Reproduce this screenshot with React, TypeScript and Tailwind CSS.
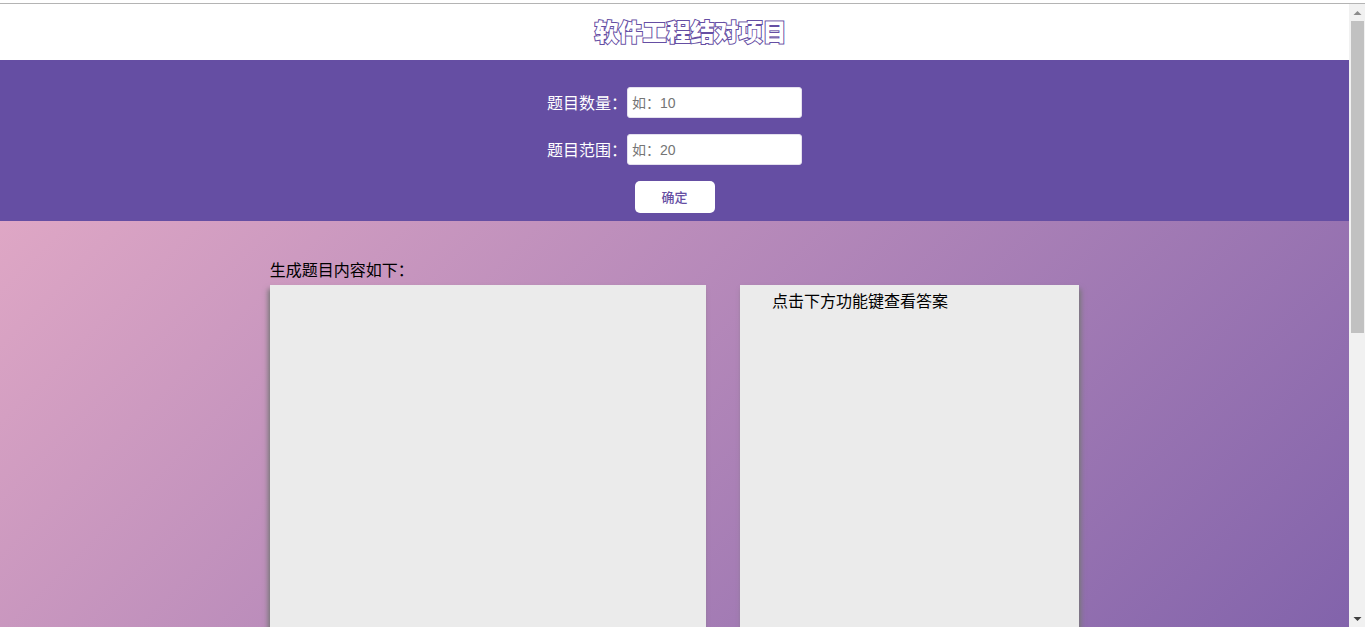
import React from "react";

function Field({ id, label, placeholder }: { id: string; label: string; placeholder: string }) {
  return (
    <div className="flex items-center">
      <label htmlFor={id} className="w-20 pb-0.5 font-['KaiTi','STKaiti','AR_PL_UKai_CN','Noto_Sans_CJK_SC',serif] text-base leading-6 text-white">
        {label}
      </label>
      <input
        id={id}
        type="text"
        placeholder={placeholder}
        className="h-[31px] w-[175px] rounded-[3px] border border-[#e4e0ee] bg-white px-1 font-['Liberation_Sans','Noto_Sans_CJK_SC',sans-serif] text-sm text-black placeholder:text-[#757575]"
      />
    </div>
  );
}

function Scrollbar() {
  return (
    <div className="flex w-4 shrink-0 flex-col items-center bg-[#f1f1f1]" aria-hidden="true">
      <svg className="h-[17px] w-4 shrink-0" viewBox="0 0 16 17">
        <path d="M4.5 11 8.5 7l4 4z" fill="#8b8b8b" />
      </svg>
      <div className="min-h-0 w-full flex-1 pl-0.5 pr-px">
        <div className="h-[53%] bg-[#c1c1c1]" />
      </div>
      <svg className="h-[17px] w-4 shrink-0" viewBox="0 0 16 17">
        <path d="M4.5 7h8l-4 4z" fill="#404040" />
      </svg>
    </div>
  );
}

export default function App() {
  return (
    <div className="flex h-screen flex-col border-t-[3px] border-white bg-white font-['Noto_Sans_CJK_SC',sans-serif]">
      <div className="flex min-h-0 flex-1 border-t border-[#b4b4b4]">
        <div className="min-w-0 flex-1 overflow-y-auto [scrollbar-width:none]">
          <div className="min-h-[1176px] bg-[linear-gradient(135deg,#eaafc8,#654ea3)]">
            <header className="flex h-14 items-center justify-center bg-white pb-0.5 pl-8">
              <h1 className="text-2xl font-black text-white [-webkit-text-stroke:2px_#654ea3] [paint-order:stroke_fill]">
                软件工程结对项目
              </h1>
            </header>
            <form className="flex flex-col items-center gap-4 bg-[#654ea3] pt-[27px] pb-2" onSubmit={(e) => e.preventDefault()}>
              <Field id="count" label="题目数量：" placeholder="如：10" />
              <Field id="range" label="题目范围：" placeholder="如：20" />
              <button type="submit" className="h-8 w-20 rounded-[5px] bg-white text-[13px] font-medium text-[#654ea3]">
                确定
              </button>
            </form>
            <main className="mx-auto w-3/5 pt-9">
              <p className="mb-1 text-base leading-6">生成题目内容如下：</p>
              <div className="flex justify-between">
                <section className="h-[600px] w-[53.9%] bg-[#ebebeb] shadow-[-2px_4px_5px_#777]" />
                <section className="h-[600px] w-[41.9%] bg-[#ebebeb] px-8 py-[3px] shadow-[2px_4px_5px_#777]">
                  <p className="text-base leading-6">点击下方功能键查看答案</p>
                </section>
              </div>
            </main>
          </div>
        </div>
        <Scrollbar />
      </div>
    </div>
  );
}
